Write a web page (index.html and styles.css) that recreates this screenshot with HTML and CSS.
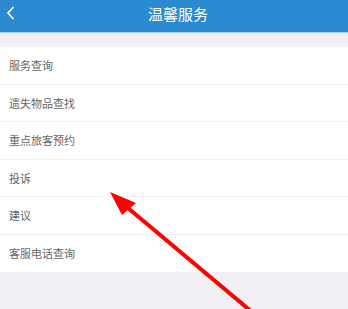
FILE: index.html
```html
<!DOCTYPE html>
<html lang="zh">
<head>
<meta charset="utf-8">
<link rel="stylesheet" href="styles.css">
</head>
<body>
<div class="page">
  <header class="nav">
    <svg class="back" width="10" height="14" viewBox="0 0 10 14"><path d="M7.5 1 L2 7 L7.5 13" fill="none" stroke="#fff" stroke-width="1.6"/></svg>
    <div class="title">温馨服务</div>
  </header>
  <div class="gap"></div>
  <ul class="list">
    <li>服务查询</li>
    <li>遗失物品查找</li>
    <li>重点旅客预约</li>
    <li>投诉</li>
    <li>建议</li>
    <li>客服电话查询</li>
  </ul>
  <svg class="arrow" width="348" height="309" viewBox="0 0 348 309">
    <line x1="122" y1="203" x2="252" y2="312" stroke="#ff0000" stroke-width="4"/>
    <polygon points="110,192 136,203 122,215" fill="#ff0000"/>
  </svg>
</div>
</body>
</html>
```
FILE: styles.css
```css
html, body {
  margin: 0;
  padding: 0;
  background: #efeff4;
}
.page {
  position: relative;
  width: 348px;
  height: 309px;
  overflow: hidden;
  font-family: "Noto Sans CJK SC", "Noto Sans", sans-serif;
}
.nav {
  height: 32px;
  background: #2a8bd1;
  border-bottom: 1px solid #a8cdef;
  display: flex;
  align-items: center;
  position: relative;
}
.back {
  position: absolute;
  left: 6px;
  top: 6px;
}
.title {
  flex: 1;
  text-align: center;
  padding-left: 8px;
  color: #fff;
  font-size: 15px;
  line-height: 32px;
  margin-top: -4px;
}
.gap {
  height: 14px;
}
.list {
  list-style: none;
  margin: 0;
  padding: 0;
  background: #fff;
}
.list li {
  height: 36.5px;
  line-height: 36.5px;
  padding-left: 9px;
  font-size: 11px;
  color: #666;
  border-bottom: 1px solid #f1f1f3;
}
.list li:last-child {
  border-bottom: none;
  height: 37px;
}
.arrow {
  position: absolute;
  left: 0;
  top: 0;
}
```
